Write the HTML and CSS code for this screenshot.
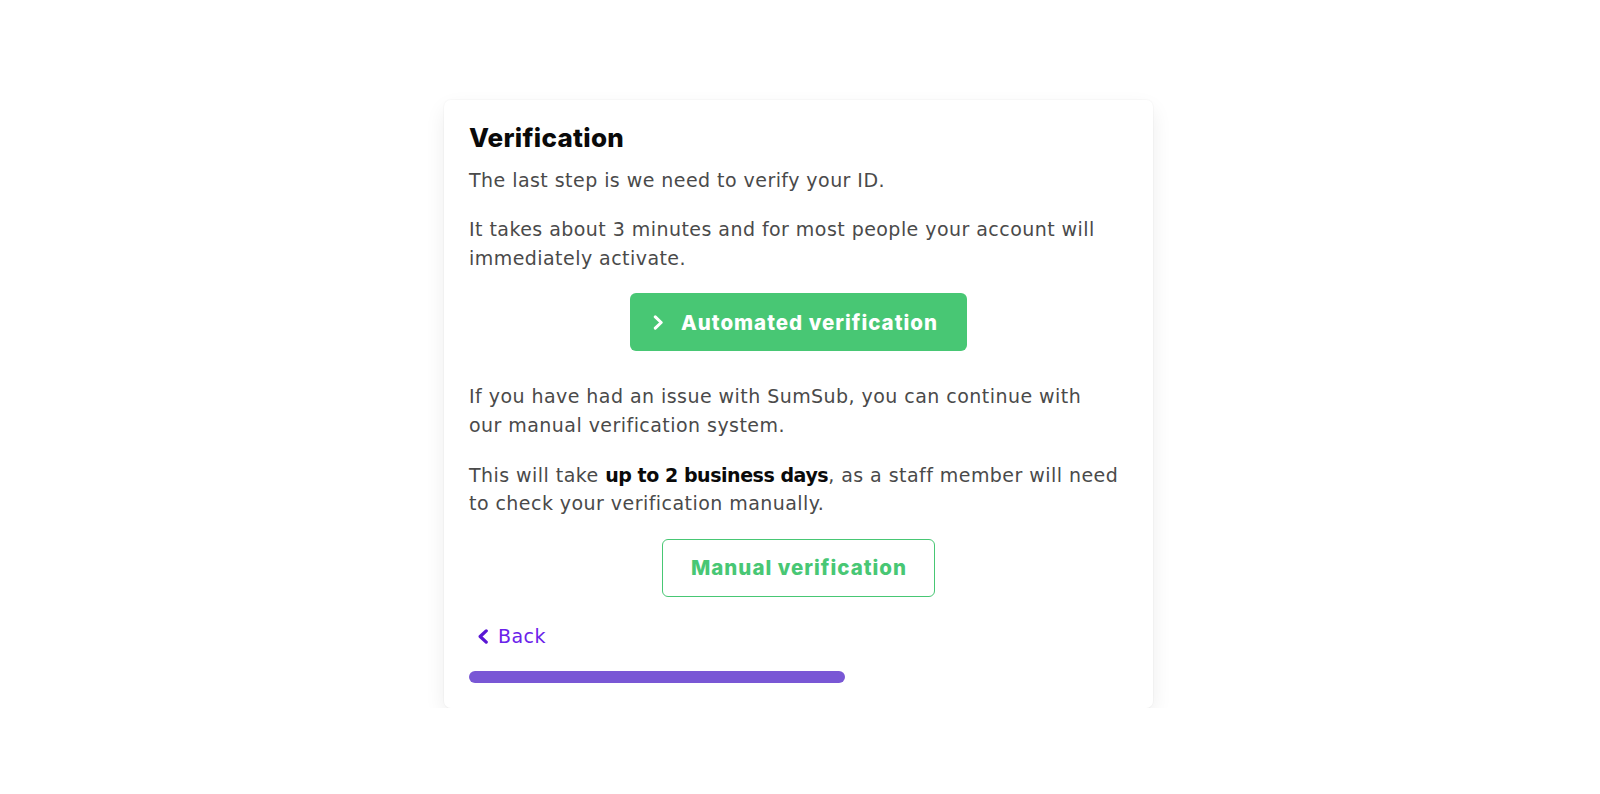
FILE: index.html
```html
<!DOCTYPE html>
<html lang="en">
<head>
<meta charset="utf-8">
<title>Verification</title>
<link rel="stylesheet" href="styles.css">
</head>
<body>
<main class="page">
  <section class="card">
    <h1 class="title">Verification</h1>
    <p class="text">The last step is we need to verify your ID.</p>
    <p class="text">It takes about 3 minutes and for most people your account will<br>immediately activate.</p>
    <div class="btn-row btn-row--primary">
      <button class="btn btn--solid" type="button">
        <svg class="btn-icon" width="11" height="15" viewBox="0 0 11 15" aria-hidden="true"><path d="M2.3 1.9 L8.2 7.5 L2.3 13.1" fill="none" stroke="#fff" stroke-width="3" stroke-linecap="round" stroke-linejoin="round"/></svg>
        <span>Automated verification</span>
      </button>
    </div>
    <p class="text">If you have had an issue with SumSub, you can continue with<br>our manual verification system.</p>
    <p class="text">This will take <strong class="strong">up to 2 business days</strong>, as a staff member will need<br>to check your verification manually.</p>
    <div class="btn-row btn-row--secondary">
      <button class="btn btn--outline" type="button">Manual verification</button>
    </div>
    <a class="back" href="#">
      <svg class="back-icon" width="12" height="15" viewBox="0 0 12 15" aria-hidden="true"><path d="M9.2 1.9 L3.2 7.5 L9.2 13.1" fill="none" stroke="#5a17d4" stroke-width="3.3" stroke-linecap="round" stroke-linejoin="round"/></svg>
      <span>Back</span>
    </a>
    <div class="progress"><div class="progress-fill" style="width: 57%"></div></div>
  </section>
</main>
</body>
</html>
```

FILE: styles.css
```css
html, body {
  margin: 0;
  padding: 0;
  background: #ffffff;
}

.page {
  padding: 100px 3px 0 0;
}

.card {
  box-sizing: border-box;
  width: 709px;
  margin: 0 auto;
  padding: 21.5px 25px 25px;
  background: #ffffff;
  border-radius: 7px;
  box-shadow: 0 8px 22px -2px rgba(10, 10, 10, 0.09), 0 0 0 1px rgba(10, 10, 10, 0.02);
  font-family: "DejaVu Sans", sans-serif;
  color: #4a4a4a;
}

.title {
  margin: 0 0 12px;
  font-family: Inter, "DejaVu Sans", sans-serif;
  font-weight: 800;
  font-size: 26px;
  line-height: 32px;
  letter-spacing: 0.3px;
  color: #0a0a0a;
}

.text {
  margin: 0;
  font-size: 19px;
  line-height: 28.4px;
  letter-spacing: 0.45px;
  white-space: nowrap;
}

.text + .text {
  margin-top: 21.5px;
}

.strong {
  font-weight: 700;
  letter-spacing: -0.45px;
  color: #0a0a0a;
}

.btn-row {
  display: flex;
  justify-content: center;
}

.btn-row--primary {
  margin: 21px 0 31.2px;
}

.btn-row--secondary {
  margin: 21.3px 0 25.2px;
}

.btn {
  box-sizing: border-box;
  display: inline-flex;
  align-items: center;
  height: 58px;
  border-radius: 6px;
  font-family: Inter, "DejaVu Sans", sans-serif;
  font-weight: 800;
  font-size: 20.5px;
  letter-spacing: 1px;
  cursor: pointer;
}

.btn--solid {
  gap: 17px;
  padding: 0 29px 0 23px;
  background: #48c774;
  border: 0;
  color: #ffffff;
}

.btn-icon {
  display: block;
  flex: none;
}

.btn--outline {
  padding: 0 27px 0 28px;
  background: #ffffff;
  border: 1px solid #48c774;
  color: #48c774;
}

.back {
  display: flex;
  align-items: center;
  gap: 9px;
  width: max-content;
  margin-left: 8px;
  font-size: 19px;
  line-height: 28.4px;
  letter-spacing: 0.45px;
  color: #6a22ea;
  text-decoration: none;
}

.back-icon {
  display: block;
  flex: none;
}

.progress {
  margin-top: 20.5px;
  height: 12.5px;
}

.progress-fill {
  height: 100%;
  background: #7957d5;
  border-radius: 7px;
}
```
